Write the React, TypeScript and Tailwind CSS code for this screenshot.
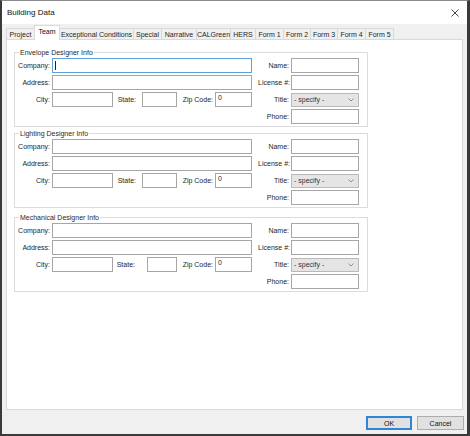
import React from "react";

const font = { fontFamily: '"Liberation Sans", Arial, sans-serif' };

function Label({ text, cls }: { text: string; cls: string }) {
  return (
    <div className={`flex h-[15px] shrink-0 items-center justify-end whitespace-nowrap text-[7px] leading-none text-[#1e1e1e] ${cls}`}>
      {text}
    </div>
  );
}

function Input({ cls, value, focused }: { cls: string; value?: string; focused?: boolean }) {
  return (
    <div
      className={`relative h-[15px] shrink-0 border bg-white ${focused ? "border-[#5f9fdc]" : "border-[#a6a6a6]"} ${cls}`}
    >
      {value && <span className="absolute left-[2px] top-[1px] text-[7px] leading-none text-[#1e1e1e]">{value}</span>}
      {focused && <span className="absolute left-[2px] top-[2px] h-[9px] w-px bg-[#222]" />}
    </div>
  );
}

function Select() {
  return (
    <div className="flex h-[14px] w-[68px] shrink-0 items-center justify-between border border-[#b9b9b9] bg-[#e5e5e5] pl-[2px] pr-[4px]">
      <span className="text-[7px] leading-none text-[#333]">- specify -</span>
      <svg width="6" height="4" viewBox="0 0 6 4" className="block">
        <path d="M0.5 0.5 L3 3 L5.5 0.5" fill="none" stroke="#777" strokeWidth="0.8" />
      </svg>
    </div>
  );
}

function Group({
  legend,
  focused,
  stateLabelCls,
  stateInputCls,
  mt,
}: {
  legend: string;
  focused?: boolean;
  stateLabelCls: string;
  stateInputCls: string;
  mt: string;
}) {
  return (
    <div className={`relative ml-[7px] w-[354px] border border-[#dcdcdc] pt-[5px] pb-[2px] ${mt}`}>
      <span className="absolute left-[4px] top-[-5px] bg-white px-px text-[7px] leading-[9px] text-[#2a2a2a]">
        {legend}
      </span>
      <div className="flex flex-col gap-[2px]">
        <div className="flex items-center">
          <Label text="Company:" cls="w-[37px] pr-[2px]" />
          <Input cls="w-[200px]" focused={focused} />
          <Label text="Name:" cls="w-[39px] pr-[2px]" />
          <Input cls="w-[68px]" />
        </div>
        <div className="flex items-center">
          <Label text="Address:" cls="w-[37px] pr-[2px]" />
          <Input cls="w-[200px]" />
          <Label text="License #:" cls="w-[39px] pr-[1px]" />
          <Input cls="w-[68px]" />
        </div>
        <div className="flex items-center">
          <Label text="City:" cls="w-[37px] pr-[2px]" />
          <Input cls="w-[61px]" />
          <Label text="State:" cls={stateLabelCls} />
          <Input cls={stateInputCls} />
          <Label text="Zip Code:" cls="w-[38px] pr-[2px]" />
          <Input cls="w-[37px]" value="0" />
          <Label text="Title:" cls="w-[39px] pr-[2px]" />
          <Select />
        </div>
        <div className="flex items-center">
          <div className="w-[237px] shrink-0" />
          <Label text="Phone:" cls="w-[39px] pr-[2px]" />
          <Input cls="w-[68px]" />
        </div>
      </div>
    </div>
  );
}

const tabs: { name: string; cls: string }[] = [
  { name: "Project", cls: "w-[29px]" },
  { name: "Team", cls: "w-[26px]" },
  { name: "Exceptional Conditions", cls: "w-[75px]" },
  { name: "Special", cls: "w-[29px]" },
  { name: "Narrative", cls: "w-[36px]" },
  { name: "CALGreen", cls: "w-[35px]" },
  { name: "HERS", cls: "w-[26px]" },
  { name: "Form 1", cls: "w-[29px]" },
  { name: "Form 2", cls: "w-[28px]" },
  { name: "Form 3", cls: "w-[28px]" },
  { name: "Form 4", cls: "w-[29px]" },
  { name: "Form 5", cls: "w-[29px]" },
];

export default function App() {
  return (
    <div
      style={font}
      className="flex h-[436px] w-[470px] flex-col border-t border-l-2 border-r-[3px] border-b-2 border-t-[#8a8a8a] border-l-[#3a3a3a] border-r-[#3a3a3a] border-b-[#3a3a3a] bg-[#f0f0f0]"
    >
      {/* title bar */}
      <div className="flex h-[23px] shrink-0 items-center justify-between bg-white pl-[5px] pr-[8px]">
        <span className="text-[8px] leading-none text-[#111]">Building Data</span>
        <svg width="8" height="8" viewBox="0 0 8 8" className="block">
          <path d="M0.5 0.5 L7.5 7.5 M7.5 0.5 L0.5 7.5" stroke="#333" strokeWidth="0.9" />
        </svg>
      </div>

      {/* tabs */}
      <div className="flex h-[15px] shrink-0 items-end pl-[4px]">
        {tabs.map((t) =>
          t.name === "Team" ? (
            <div
              key={t.name}
              className={`relative z-10 -mb-px -ml-px flex h-[15px] items-start justify-center border border-b-0 border-[#d9d9d9] bg-white pt-[2px] text-[7px] leading-none text-[#111] ${t.cls}`}
            >
              {t.name}
            </div>
          ) : (
            <div
              key={t.name}
              className={`-ml-px flex h-[11px] first:ml-0 items-center justify-center border border-b-0 border-[#d9d9d9] bg-[#f0f0f0] text-[7px] leading-none whitespace-nowrap text-[#1e1e1e] ${t.cls}`}
            >
              {t.name}
            </div>
          )
        )}
      </div>

      {/* panel */}
      <div className="mx-[4px] h-[371px] w-[457px] shrink-0 border border-[#d9d9d9] bg-white pt-[12px]">
        <Group
          legend="Envelope Designer Info"
          focused
          mt="mt-0"
          stateLabelCls="w-[29px] pr-[6px]"
          stateInputCls="w-[35px]"
        />
        <Group
          legend="Lighting Designer Info"
          mt="mt-[6px]"
          stateLabelCls="w-[29px] pr-[6px]"
          stateInputCls="w-[35px]"
        />
        <Group
          legend="Mechanical Designer Info"
          mt="mt-[9px]"
          stateLabelCls="w-[34px] pr-[12px]"
          stateInputCls="w-[30px]"
        />
      </div>

      {/* buttons */}
      <div className="flex justify-end gap-[5px] pr-[3px] pt-[6px]">
        <button className="flex h-[14px] w-[46px] items-center justify-center border border-[#2f86d6] bg-[#e1e1e1] text-[7px] leading-none text-[#111] outline outline-1 outline-offset-[-2px] outline-[#2f86d6]">
          OK
        </button>
        <button className="flex h-[14px] w-[47px] items-center justify-center border border-[#adadad] bg-[#e1e1e1] text-[7px] leading-none text-[#111]">
          Cancel
        </button>
      </div>
    </div>
  );
}
